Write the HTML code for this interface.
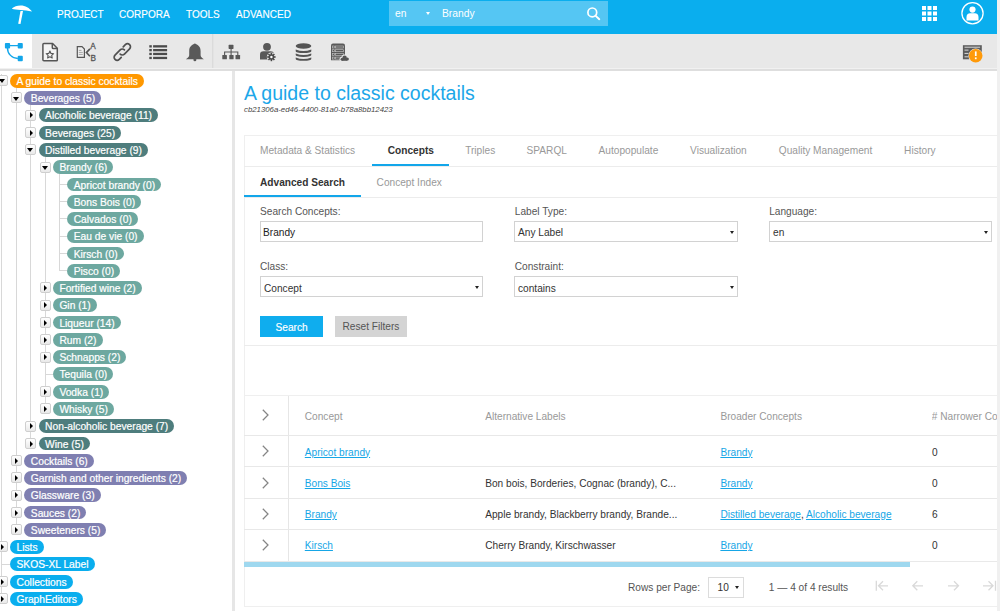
<!DOCTYPE html>
<html><head><meta charset="utf-8">
<style>
*{box-sizing:border-box;margin:0;padding:0}
html,body{width:1000px;height:611px;overflow:hidden;background:#fff;font-family:"Liberation Sans",sans-serif;}
.abs{position:absolute}
#top{position:absolute;left:0;top:0;width:997px;height:33.6px;background:#0AAEEE}
.nav{position:absolute;top:9.2px;-webkit-text-stroke:0.15px #fff;color:#fff;font-size:11.5px;line-height:11.5px;transform:scaleX(0.87);transform-origin:0 0}
.sb{position:absolute;top:9px;color:#fff;font-size:10.3px;line-height:10.3px;white-space:nowrap}
#sbox{position:absolute;left:388.5px;top:1px;width:219.5px;height:24.5px;background:#55C6F3}
#tb{position:absolute;left:0;top:33.6px;width:997px;height:34.4px;background:#E8E8E8}
#tree{position:absolute;left:0;top:71px;width:232px;height:540px;background:#fff;overflow:hidden}
#split{position:absolute;left:232px;top:71px;width:3px;height:540px;background:#e6e6e6}
.row{position:absolute;height:13.8px;font-size:10.25px;line-height:15.4px;color:#fff;-webkit-text-stroke:0.2px #fff;border-radius:7px;padding:0 6.1px 0 6.5px;white-space:nowrap}
.tg{position:absolute;width:11px;height:11px;border:1px solid #cfcfcf;border-radius:2px;background:linear-gradient(#fff,#e9e9e9)}
.tg i{position:absolute;width:0;height:0}
.td{border-left:3.8px solid transparent;border-right:3.8px solid transparent;border-top:4.1px solid #000;left:0.9px;top:3.1px}
.tr{border-top:3.2px solid transparent;border-bottom:3.2px solid transparent;border-left:3.8px solid #000;left:3.3px;top:1.7px}
.vl{position:absolute;width:1px;background:#d8d8d8}
.hl{position:absolute;height:1px;background:#d8d8d8}
.c0{background:#FF9800}.c1{background:#7F7FB1}.c2{background:#4E7D7D}.c3{background:#6DA8A0}.cb{background:#0AAEEE}
.t{position:absolute;margin-top:1px;font-size:10.15px;line-height:10.15px;white-space:nowrap;color:#555}
.ln{position:absolute;background:#ececec}
.inp{position:absolute;border:1px solid #d2d2d2;background:#fff}
.car{position:absolute;width:0;height:0;border-left:2.3px solid transparent;border-right:2.3px solid transparent;border-top:3px solid #222}
.lk{color:#16A6E6;text-decoration:underline}
.chev{position:absolute;width:7px;height:12px}
</style></head><body>
<div id="top">
  <svg class="abs" style="left:0;top:0" width="40" height="30" viewBox="0 0 40 30"><path d="M12.1 8.3 C14 6.5 17 5.5 20.5 5.4 C25.5 5.4 29.5 7.8 32 11.6 C28 10.6 24 10 20.5 9.9 C17 9.8 14 9.3 12.1 8.7Z" fill="#fff"/><path d="M20.5 11 L23 11.1 L20.5 23.9 L18.2 23.7Z" fill="#fff"/></svg>
  <div class="nav" style="left:56.5px">PROJECT</div>
  <div class="nav" style="left:119px">CORPORA</div>
  <div class="nav" style="left:186px">TOOLS</div>
  <div class="nav" style="left:236px">ADVANCED</div>
  <div id="sbox"></div>
  <div class="sb" style="left:395px">en</div>
  <div class="car" style="left:425.5px;top:11.5px;border-top-color:#fff;border-left-width:2.6px;border-right-width:2.6px;border-top-width:3px"></div>
  <div class="sb" style="left:442px">Brandy</div>
  <svg class="abs" style="left:585px;top:5px" width="16" height="16" viewBox="0 0 16 16"><circle cx="7.3" cy="7.4" r="4.4" fill="none" stroke="#fff" stroke-width="1.7"/><path d="M10.4 10.6 L14.3 14.2" stroke="#fff" stroke-width="1.9" stroke-linecap="round"/></svg>
  <svg class="abs" style="left:922px;top:6px" width="16" height="16" viewBox="0 0 16 16" fill="#fff">
    <rect x="0" y="0" width="4" height="4"/><rect x="5.5" y="0" width="4" height="4"/><rect x="11" y="0" width="4" height="4"/>
    <rect x="0" y="5.5" width="4" height="4"/><rect x="5.5" y="5.5" width="4" height="4"/><rect x="11" y="5.5" width="4" height="4"/>
    <rect x="0" y="11" width="4" height="4"/><rect x="5.5" y="11" width="4" height="4"/><rect x="11" y="11" width="4" height="4"/>
  </svg>
  <svg class="abs" style="left:960px;top:1px" width="25" height="25" viewBox="0 0 25 25"><circle cx="12.5" cy="12.2" r="10.6" fill="none" stroke="#fff" stroke-width="1.3"/><circle cx="12.5" cy="8.6" r="3.1" fill="#fff"/><path d="M6.5 19.5 L6.5 16 C6.5 13.2 8.5 12.3 10 12.3 L15 12.3 C16.5 12.3 18.5 13.2 18.5 16 L18.5 19.5Z" fill="#fff"/></svg>
</div>
<div id="tb">
  <div class="abs" style="left:0;top:0;width:32.3px;height:34.4px;background:#fff"></div>
</div>
<svg class="abs" style="left:0;top:33.6px" width="1000" height="36" viewBox="0 33.6 1000 36">
 <g fill="#12A6EA" stroke="none">
  <rect x="4.9" y="42.6" width="5.2" height="5.4" rx="0.9"/>
  <rect x="17.7" y="42.6" width="5.1" height="5.4" rx="0.9"/>
  <rect x="17.7" y="55.4" width="5.1" height="5.4" rx="0.9"/>
 </g>
 <path d="M9.5 45.2 H18 M7.5 47.5 A10.4 10.4 0 0 0 17.9 58.1" fill="none" stroke="#12A6EA" stroke-width="1.4"/>
 <g fill="none" stroke="#555" stroke-width="1.5" stroke-linejoin="round">
  <path d="M42.9 44 Q42.9 43 43.9 43 H52.6 L57.3 47.8 V59.5 Q57.3 60.3 56.5 60.3 H43.9 Q42.9 60.3 42.9 59.3 Z" fill="#f4f4f4"/>
  <path d="M52.3 43.2 V47 Q52.3 48.1 53.4 48.1 H57.2"/>
  <path d="M49.9 50.6 L51 53 L53.6 53.3 L51.7 55 L52.2 57.6 L49.9 56.3 L47.6 57.6 L48.1 55 L46.2 53.3 L48.8 53 Z" stroke-width="1.1"/>
 </g>
 <g fill="none" stroke="#555" stroke-width="1.2">
  <path d="M77.3 46.3 H82 L84.4 48.7 V57 H77.3 Z" fill="#efefef"/>
  <path d="M78.8 50 H81.5 M78.8 52 H82.8 M78.8 54 H82.8" stroke-width="0.7" stroke="#888"/>
  <path d="M89.9 48.5 L86.4 52.2 L89.9 55.9" stroke-width="1.6"/>
 </g>
 <text x="90.2" y="48.5" font-family="Liberation Sans" font-size="8.2" fill="#555" stroke="#555" stroke-width="0.3">A</text>
 <text x="90.6" y="60.6" font-family="Liberation Sans" font-size="8.2" fill="#555" stroke="#555" stroke-width="0.3">B</text>
 <g transform="translate(122.3 51.6) rotate(-45)" fill="none" stroke="#505050" stroke-width="1.7" stroke-linecap="round"><path d="M4.3 -3 H7.3 A3 3 0 0 1 7.3 3 H0 A3 3 0 0 1 -3 0"/><path d="M-4.5 3 H-7.3 A3 3 0 0 1 -7.3 -3 H0 A3 3 0 0 1 3 0"/></g>
 <g fill="#4a4a4a">
  <rect x="149.3" y="44.8" width="2.5" height="2.3"/><rect x="153.1" y="44.8" width="14" height="2.3"/>
  <rect x="149.3" y="48.6" width="2.5" height="2.3"/><rect x="153.1" y="48.6" width="14" height="2.3"/>
  <rect x="149.3" y="52.4" width="2.5" height="2.3"/><rect x="153.1" y="52.4" width="14" height="2.3"/>
  <rect x="149.3" y="56.4" width="2.5" height="2.3"/><rect x="153.1" y="56.4" width="14" height="2.3"/>
 </g>
 <path d="M194.9 43.1 C193.5 43.6 189.2 45.3 189.2 50.5 L189.2 54.8 C189.2 56.6 187.2 57.9 185.8 58.9 L203.9 58.9 C202.5 57.9 200.6 56.6 200.6 54.8 L200.6 50.5 C200.6 45.3 196.3 43.6 194.9 43.1Z" fill="#595959"/>
 <circle cx="194.9" cy="59.3" r="1.5" fill="#595959"/>
 <rect x="212.3" y="33.6" width="1" height="36" fill="#d6d6d6"/>
 <g fill="#585858">
  <rect x="228.6" y="44.4" width="4.9" height="4.1" rx="0.6"/>
  <rect x="222.3" y="54.6" width="4.6" height="4.3" rx="0.6"/>
  <rect x="229.3" y="54.6" width="4.3" height="4.3" rx="0.6"/>
  <rect x="235.5" y="54.6" width="4.6" height="4.3" rx="0.6"/>
 </g>
 <path d="M231.1 48.4 V54.7 M224.6 54.7 V51.6 H237.8 V54.7" fill="none" stroke="#585858" stroke-width="1.1"/>
 <circle cx="267" cy="46.4" r="3.9" fill="#585858"/>
 <path d="M260 59 V54 Q260 50.8 263.5 50.8 H270.5 Q273.5 50.8 273.8 53 V59 Z" fill="#585858"/>
 <circle cx="271.4" cy="56.6" r="4.6" fill="#e8e8e8"/>
 <g fill="#4a4a4a"><circle cx="271.4" cy="56.6" r="2.8"/>
  <rect x="270.6" y="52.4" width="1.6" height="8.4"/><rect x="267.2" y="55.8" width="8.4" height="1.6"/>
  <rect x="270.6" y="52.4" width="1.6" height="8.4" transform="rotate(45 271.4 56.6)"/><rect x="267.2" y="55.8" width="8.4" height="1.6" transform="rotate(45 271.4 56.6)"/>
 </g>
 <circle cx="271.4" cy="56.6" r="1.2" fill="#fff"/>
 <g fill="#555">
  <ellipse cx="303.5" cy="45.6" rx="7.8" ry="2.8"/>
  <path d="M295.7 49.2 Q303.5 52.2 311.3 49.2 V50.8 Q311.3 52.6 303.5 52.6 Q295.7 52.6 295.7 50.8Z"/>
  <path d="M295.7 53.1 Q303.5 56.1 311.3 53.1 V54.7 Q311.3 56.5 303.5 56.5 Q295.7 56.5 295.7 54.7Z"/>
  <path d="M295.7 57 Q303.5 60 311.3 57 V58.6 Q311.3 60.4 303.5 60.4 Q295.7 60.4 295.7 58.6Z"/>
 </g>
 <path d="M331 45 Q331 43 333 43 H343 Q345 43 345 45 V59.9 H331Z" fill="#5a5a5a"/>
 <g fill="none" stroke="#c8c8c8" stroke-width="0.6">
  <rect x="332.3" y="45.6" width="2.4" height="2"/><rect x="335.6" y="45.6" width="8" height="2"/>
  <rect x="332.3" y="49.3" width="2.4" height="2"/><rect x="335.6" y="49.3" width="8" height="2"/>
  <rect x="332.3" y="53" width="2.4" height="2"/><rect x="335.6" y="53" width="8" height="2"/>
  <rect x="332.3" y="56.7" width="2.4" height="2"/><rect x="335.6" y="56.7" width="5" height="2"/>
 </g>
 <g fill="#e8e8e8"><circle cx="344.6" cy="57.4" r="3.2"/><circle cx="347.3" cy="58.6" r="2.6"/><circle cx="342" cy="58.9" r="2.5"/><rect x="340" y="58.5" width="10.3" height="3"/></g>
 <g fill="#555"><circle cx="344.6" cy="57.4" r="2.2"/><circle cx="347.3" cy="58.6" r="1.6"/><circle cx="342.1" cy="58.9" r="1.5"/><rect x="342.1" y="58.6" width="5.2" height="1.8"/></g>
 <rect x="962.9" y="44.8" width="18.9" height="14.1" fill="#5c5c5c"/>
 <g fill="#d8d8d8"><rect x="964.5" y="46.3" width="15.6" height="1"/><rect x="964.5" y="49.2" width="4" height="1"/><rect x="964.5" y="52.5" width="4" height="1"/><rect x="964.5" y="55.9" width="4" height="1"/></g>
 <circle cx="975.7" cy="55.4" r="7.3" fill="#e8e8e8"/>
 <circle cx="975.7" cy="55.4" r="6.8" fill="#FF9A0A"/>
 <rect x="974.9" y="51" width="1.7" height="4.6" fill="#fff"/><rect x="974.9" y="57" width="1.7" height="1.8" fill="#fff"/>
</svg>
<div class="abs" style="left:0;top:68px;width:997px;height:1px;background:#f1f1f1"></div><div class="abs" style="left:0;top:69px;width:997px;height:2px;background:#dedede"></div>
<div id="tree"><div class="vl" style="left:16.1px;top:16.7px;height:442.12px"></div>
<div class="vl" style="left:30.4px;top:33.97px;height:338.5px"></div>
<div class="vl" style="left:44.7px;top:85.78px;height:252.15px"></div>
<div class="vl" style="left:59px;top:103.05px;height:96.72px"></div>
<div class="vl" style="left:1.3px;top:3.3px;height:524.6px"></div>
<div class="tg" style="left:-3.2px;top:4.2px"><i class="td"></i></div>
<div class="tg" style="left:11.1px;top:21.47px"><i class="td"></i></div>
<div class="tg" style="left:25.4px;top:38.74px"><i class="tr"></i></div>
<div class="tg" style="left:25.4px;top:56.01px"><i class="tr"></i></div>
<div class="tg" style="left:25.4px;top:73.28px"><i class="td"></i></div>
<div class="tg" style="left:39.7px;top:90.55px"><i class="td"></i></div>
<div class="hl" style="left:59px;top:112.92px;width:8.2px"></div>
<div class="hl" style="left:59px;top:130.19px;width:8.2px"></div>
<div class="hl" style="left:59px;top:147.46px;width:8.2px"></div>
<div class="hl" style="left:59px;top:164.73px;width:8.2px"></div>
<div class="hl" style="left:59px;top:182px;width:8.2px"></div>
<div class="hl" style="left:59px;top:199.27px;width:8.2px"></div>
<div class="tg" style="left:39.7px;top:211.44px"><i class="tr"></i></div>
<div class="tg" style="left:39.7px;top:228.71px"><i class="tr"></i></div>
<div class="tg" style="left:39.7px;top:245.98px"><i class="tr"></i></div>
<div class="tg" style="left:39.7px;top:263.25px"><i class="tr"></i></div>
<div class="tg" style="left:39.7px;top:280.52px"><i class="tr"></i></div>
<div class="hl" style="left:44.7px;top:302.89px;width:8.2px"></div>
<div class="tg" style="left:39.7px;top:315.06px"><i class="tr"></i></div>
<div class="tg" style="left:39.7px;top:332.33px"><i class="tr"></i></div>
<div class="tg" style="left:25.4px;top:349.6px"><i class="tr"></i></div>
<div class="tg" style="left:25.4px;top:366.87px"><i class="tr"></i></div>
<div class="tg" style="left:11.1px;top:384.14px"><i class="tr"></i></div>
<div class="tg" style="left:11.1px;top:401.41px"><i class="tr"></i></div>
<div class="tg" style="left:11.1px;top:418.68px"><i class="tr"></i></div>
<div class="tg" style="left:11.1px;top:435.95px"><i class="tr"></i></div>
<div class="tg" style="left:11.1px;top:453.22px"><i class="tr"></i></div>
<div class="tg" style="left:-3.2px;top:470.49px"><i class="tr"></i></div>
<div class="hl" style="left:1.8px;top:492.86px;width:8.2px"></div>
<div class="tg" style="left:-3.2px;top:505.03px"><i class="tr"></i></div>
<div class="tg" style="left:-3.2px;top:522.3px"><i class="tr"></i></div>
<div class="row c0" style="left:10px;top:2.9px">A guide to classic cocktails</div>
<div class="row c1" style="left:24.3px;top:20.17px">Beverages (5)</div>
<div class="row c2" style="left:38.6px;top:37.44px">Alcoholic beverage (11)</div>
<div class="row c2" style="left:38.6px;top:54.71px">Beverages (25)</div>
<div class="row c2" style="left:38.6px;top:71.98px">Distilled beverage (9)</div>
<div class="row c3" style="left:52.9px;top:89.25px">Brandy (6)</div>
<div class="row c3" style="left:67.2px;top:106.52px">Apricot brandy (0)</div>
<div class="row c3" style="left:67.2px;top:123.79px">Bons Bois (0)</div>
<div class="row c3" style="left:67.2px;top:141.06px">Calvados (0)</div>
<div class="row c3" style="left:67.2px;top:158.33px">Eau de vie (0)</div>
<div class="row c3" style="left:67.2px;top:175.6px">Kirsch (0)</div>
<div class="row c3" style="left:67.2px;top:192.87px">Pisco (0)</div>
<div class="row c3" style="left:52.9px;top:210.14px">Fortified wine (2)</div>
<div class="row c3" style="left:52.9px;top:227.41px">Gin (1)</div>
<div class="row c3" style="left:52.9px;top:244.68px">Liqueur (14)</div>
<div class="row c3" style="left:52.9px;top:261.95px">Rum (2)</div>
<div class="row c3" style="left:52.9px;top:279.22px">Schnapps (2)</div>
<div class="row c3" style="left:52.9px;top:296.49px">Tequila (0)</div>
<div class="row c3" style="left:52.9px;top:313.76px">Vodka (1)</div>
<div class="row c3" style="left:52.9px;top:331.03px">Whisky (5)</div>
<div class="row c2" style="left:38.6px;top:348.3px">Non-alcoholic beverage (7)</div>
<div class="row c2" style="left:38.6px;top:365.57px">Wine (5)</div>
<div class="row c1" style="left:24.3px;top:382.84px">Cocktails (6)</div>
<div class="row c1" style="left:24.3px;top:400.11px">Garnish and other ingredients (2)</div>
<div class="row c1" style="left:24.3px;top:417.38px">Glassware (3)</div>
<div class="row c1" style="left:24.3px;top:434.65px">Sauces (2)</div>
<div class="row c1" style="left:24.3px;top:451.92px">Sweeteners (5)</div>
<div class="row cb" style="left:10px;top:469.19px">Lists</div>
<div class="row cb" style="left:10px;top:486.46px">SKOS-XL Label</div>
<div class="row cb" style="left:10px;top:503.73px">Collections</div>
<div class="row cb" style="left:10px;top:521px">GraphEditors</div></div>
<div id="split"></div>
<div class="abs" style="left:997px;top:0;width:3px;height:611px;background:#f0f0f0"></div>

<!-- main -->
<div class="t" style="left:244px;top:82.9px;font-size:19.5px;line-height:19.5px;color:#1CA7E9">A guide to classic cocktails</div>
<div class="t" style="left:244px;top:105px;font-size:7.8px;line-height:7.8px;font-style:italic;color:#444">cb21306a-ed46-4400-81a0-b78a8bb12423</div>

<!-- card -->
<div class="abs" style="left:243.6px;top:134.5px;width:754px;height:472.5px;border:1px solid #efefef;border-right:none"></div>
<div class="ln" style="left:244px;top:165.5px;width:753px;height:1px"></div>
<div class="t" style="left:260px;top:145.4px;color:#999">Metadata &amp; Statistics</div>
<div class="t" style="left:387.8px;top:145.4px;color:#333;font-weight:bold">Concepts</div>
<div class="t" style="left:465.2px;top:145.4px;color:#999">Triples</div>
<div class="t" style="left:526.6px;top:145.4px;color:#999">SPARQL</div>
<div class="t" style="left:598.6px;top:145.4px;color:#999">Autopopulate</div>
<div class="t" style="left:690.1px;top:145.4px;color:#999">Visualization</div>
<div class="t" style="left:778.8px;top:145.4px;color:#999">Quality Management</div>
<div class="t" style="left:904.1px;top:145.4px;color:#999">History</div>
<div class="abs" style="left:372.2px;top:164px;width:77.1px;height:2px;background:#12A6EA"></div>

<div class="ln" style="left:244px;top:196.8px;width:753px;height:1px"></div>
<div class="t" style="left:260px;top:176.7px;color:#333;font-weight:bold">Advanced Search</div>
<div class="t" style="left:376.6px;top:176.7px;color:#999">Concept Index</div>
<div class="abs" style="left:244px;top:195.2px;width:116.8px;height:2px;background:#12A6EA"></div>

<div class="t" style="left:260px;top:206.4px">Search Concepts:</div>
<div class="t" style="left:514.8px;top:206.4px">Label Type:</div>
<div class="t" style="left:769.2px;top:206.4px">Language:</div>
<div class="inp" style="left:260px;top:221.2px;width:222.5px;height:21.3px"></div>
<div class="inp" style="left:514.2px;top:221.2px;width:224px;height:21.3px"></div>
<div class="inp" style="left:769.2px;top:221.2px;width:222.4px;height:21.3px"></div>
<div class="t" style="left:263px;top:226.9px;color:#222">Brandy</div>
<div class="t" style="left:518px;top:226.9px;color:#333">Any Label</div>
<div class="t" style="left:773px;top:226.9px;color:#333">en</div>
<div class="car" style="left:729.5px;top:231px"></div>
<div class="car" style="left:983.5px;top:231px"></div>

<div class="t" style="left:260px;top:261.4px">Class:</div>
<div class="t" style="left:514.8px;top:261.4px">Constraint:</div>
<div class="inp" style="left:260px;top:276.2px;width:222.5px;height:21.2px"></div>
<div class="inp" style="left:514.2px;top:276.2px;width:224px;height:21.2px"></div>
<div class="t" style="left:264px;top:282.7px;color:#333">Concept</div>
<div class="t" style="left:518px;top:282.7px;color:#333">contains</div>
<div class="car" style="left:474.5px;top:286px"></div>
<div class="car" style="left:729.5px;top:286px"></div>

<div class="abs" style="left:259.9px;top:315.9px;width:62.7px;height:21px;background:#0FADEE"></div>
<div class="t" style="left:275.6px;top:321.6px;color:#fff;-webkit-text-stroke:0.15px #fff">Search</div>
<div class="abs" style="left:334.5px;top:315.8px;width:72px;height:21px;background:#D4D4D4"></div>
<div class="t" style="left:342.5px;top:321.4px;color:#555">Reset Filters</div>
<div class="ln" style="left:244px;top:344.5px;width:753px;height:1px"></div>

<!-- table -->
<div class="ln" style="left:244px;top:395.3px;width:753px;height:1px;background:#efefef"></div>
<div class="ln" style="left:288px;top:395.5px;width:1px;height:166px;background:#e6e6e6"></div>
<div class="ln" style="left:244px;top:435px;width:753px;height:1px;background:#e8e8e8"></div>
<div class="ln" style="left:244px;top:466px;width:753px;height:1px;background:#e8e8e8"></div>
<div class="ln" style="left:244px;top:497.6px;width:753px;height:1px;background:#e8e8e8"></div>
<div class="ln" style="left:244px;top:529px;width:753px;height:1px;background:#e8e8e8"></div>
<svg class="chev" style="left:262.2px;top:408.5px" viewBox="0 0 7 12"><path d="M0.8 0.8 L6 6 L0.8 11.2" fill="none" stroke="#858585" stroke-width="1.25"/></svg>
<svg class="chev" style="left:262.2px;top:445.2px" viewBox="0 0 7 12"><path d="M0.8 0.8 L6 6 L0.8 11.2" fill="none" stroke="#858585" stroke-width="1.25"/></svg>
<svg class="chev" style="left:262.2px;top:476.5px" viewBox="0 0 7 12"><path d="M0.8 0.8 L6 6 L0.8 11.2" fill="none" stroke="#858585" stroke-width="1.25"/></svg>
<svg class="chev" style="left:262.2px;top:507.8px" viewBox="0 0 7 12"><path d="M0.8 0.8 L6 6 L0.8 11.2" fill="none" stroke="#858585" stroke-width="1.25"/></svg>
<svg class="chev" style="left:262.2px;top:539.1px" viewBox="0 0 7 12"><path d="M0.8 0.8 L6 6 L0.8 11.2" fill="none" stroke="#858585" stroke-width="1.25"/></svg>

<div class="t" style="left:304.8px;top:410.9px;color:#999">Concept</div>
<div class="t" style="left:485.2px;top:410.9px;color:#999">Alternative Labels</div>
<div class="t" style="left:720.4px;top:410.9px;color:#999">Broader Concepts</div>
<div class="t" style="left:931.8px;top:410.9px;color:#999;width:65px;overflow:hidden;height:14px">&#35; Narrower Concepts</div>

<div class="t lk" style="left:304.8px;top:446.5px">Apricot brandy</div>
<div class="t lk" style="left:720.4px;top:446.5px">Brandy</div>
<div class="t" style="left:932px;top:446.5px;color:#333">0</div>

<div class="t lk" style="left:304.8px;top:477.8px">Bons Bois</div>
<div class="t" style="left:485.2px;top:477.8px;color:#333">Bon bois, Borderies, Cognac (brandy), C...</div>
<div class="t lk" style="left:720.4px;top:477.8px">Brandy</div>
<div class="t" style="left:932px;top:477.8px;color:#333">0</div>

<div class="t lk" style="left:304.8px;top:509.1px">Brandy</div>
<div class="t" style="left:485.2px;top:509.1px;color:#333">Apple brandy, Blackberry brandy, Brande...</div>
<div class="t" style="left:720.4px;top:509.1px;color:#333"><span class="lk">Distilled beverage</span>, <span class="lk">Alcoholic beverage</span></div>
<div class="t" style="left:932px;top:509.1px;color:#333">6</div>

<div class="t lk" style="left:304.8px;top:540.4px">Kirsch</div>
<div class="t" style="left:485.2px;top:540.4px;color:#333">Cherry Brandy, Kirschwasser</div>
<div class="t lk" style="left:720.4px;top:540.4px">Brandy</div>
<div class="t" style="left:932px;top:540.4px;color:#333">0</div>

<div class="abs" style="left:244px;top:561.3px;width:665.7px;height:5.5px;background:#9FD8EF"></div>

<div class="t" style="left:628px;top:582.4px">Rows per Page:</div>
<div class="inp" style="left:708.2px;top:576.5px;width:35.5px;height:21px;border-color:#dcdcdc"></div>
<div class="t" style="left:717.5px;top:582.4px;color:#333">10</div>
<div class="car" style="left:735px;top:585.5px"></div>
<div class="t" style="left:768.8px;top:582.4px;color:#555">1 — 4 of 4 results</div>
<svg class="abs" style="left:870px;top:578px" width="130" height="16" viewBox="0 0 130 16" fill="none" stroke="#d9d9d9" stroke-width="1.3">
  <path d="M6.3 2.8 V12.8 M18 7.8 H8.8 M13 3.3 L8.5 7.8 L13 12.3"/>
  <path d="M53 7.8 H42.8 M47.3 3.3 L42.8 7.8 L47.3 12.3"/>
  <path d="M78 7.8 H88.5 M84 3.3 L88.5 7.8 L84 12.3"/>
  <path d="M125.5 2.8 V12.8 M113 7.8 H123 M118.5 3.3 L123 7.8 L118.5 12.3"/>
</svg>
<div class="ln" style="left:244px;top:561px;width:753px;height:1px;background:#e9e9e9"></div>
</body></html>
